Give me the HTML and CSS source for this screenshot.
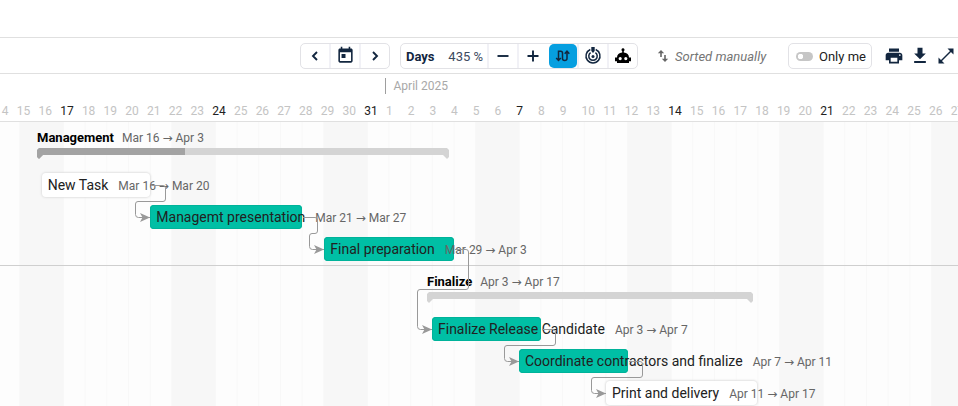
FILE: index.html
```html
<!DOCTYPE html>
<html lang="en">
<head>
    <meta charset="UTF-8">
    <meta name="viewport" content="width=device-width, initial-scale=1.0">
    <title>Gantt</title>
    <link rel="stylesheet" href="styles.css">
</head>
<body>
    <div class="toolbar">
        <div class="btn-group">
            <button class="btn"><svg width="16" height="16" viewBox="0 0 16 16"><path class="stroke" d="M10 4L6 8l4 4"/></svg></button>
            <button class="btn"><svg width="19" height="19" viewBox="0 0 24 24"><path d="M19 3h-1V1h-2v2H8V1H6v2H5c-1.11 0-1.99.9-1.99 2L3 19c0 1.1.89 2 2 2h14c1.1 0 2-.9 2-2V5c0-1.1-.9-2-2-2zm0 16H5V8h14v11zM7 10h5v5H7z"/></svg></button>
            <button class="btn"><svg width="16" height="16" viewBox="0 0 16 16"><path class="stroke" d="M6 4l4 4-4 4"/></svg></button>
        </div>

        <div class="btn-group zoom-group">
            <div class="scale"><b>Days</b><span>435 %</span></div>
            <button class="btn"><svg width="16" height="16" viewBox="0 0 16 16"><path class="stroke" d="M2.5 8h11"/></svg></button>
            <button class="btn"><svg width="16" height="16" viewBox="0 0 16 16"><path class="stroke" d="M2.5 8h11M8 2.5v11"/></svg></button>
            <button class="btn active"><svg width="16" height="16" viewBox="0 0 16 16"><path class="thin" d="M1.200 10l2.300 2.500L5.800 10M3.500 12V3.200h2.200Q7.500 3.200 7.500 5v5.500q0 2 2.200 2t2.300-2V3.500M9.700 5.700L12 3.200l2.300 2.500"/></svg></button>
            <button class="btn"><svg width="18" height="18" viewBox="0 0 18 18"><path class="thin" d="M6.300 2.500a7 7 0 1 0 5.400 0M6.600 5.700a4.200 4.200 0 1 0 4.800 0"/><circle cx="9" cy="9.500" r="1.500"/><path d="M7.300 0h3.400v4L9 6 7.300 4z"/></svg></button>
            <button class="btn"><svg width="18" height="18" viewBox="0 0 18 18"><path class="robot" fill-rule="evenodd" d="M9 1.300a1.500 1.500 0 0 1 .8 2.800V5.500c3.200.3 5.200 2.300 5.200 5h2v3.800h-2V16H3v-1.700H1v-3.800h2c0-2.700 2-4.700 5.200-5V4.100A1.500 1.500 0 0 1 9 1.300zM6.200 10a1.600 1.600 0 1 0 0 3.200 1.600 1.600 0 0 0 0-3.200zm5.600 0a1.600 1.600 0 1 0 0 3.200 1.600 1.600 0 0 0 0-3.200z"/></svg></button>
        </div>

        <div class="sorting">
            <svg width="12" height="14" viewBox="0 0 12 14"><path d="M4 1L.8 4.200h2.400V8h1.600V4.200h2.400zM8 13l3.200-3.200H8.800V6H7.200v3.800H4.800z"/></svg>
            <span>Sorted manually</span>
        </div>

        <div class="only-me"><span class="switch"></span>Only me</div>

        <div class="actions">
            <svg width="20" height="20" viewBox="0 0 24 24"><path d="M19 8H5c-1.660 0-3 1.340-3 3v6h4v4h12v-4h4v-6c0-1.660-1.340-3-3-3zm-3 11H8v-5h8v5zm3-7c-.55 0-1-.45-1-1s.45-1 1-1 1 .45 1 1-.45 1-1 1zm-1-9H6v4h12V3z"/></svg>
            <svg width="20" height="20" viewBox="0 0 24 24"><path d="M19 9h-4V2H9v7H5l7 7 7-7zM5 18v2.300h14V18H5z"/></svg>
            <svg width="20" height="20" viewBox="0 0 20 20"><path class="thin" d="M4 16L16 4"/><path d="M11.500 2.500h6v6zM2.500 11.500v6h6z"/></svg>
        </div>
    </div>

    <div class="timeline">
        <div class="month">April 2025</div>
        <div class="days" id="days"></div>
    </div>

    <div class="chart">
        <div class="group management">
            <div class="group-title"><b>Management</b><span class="dates">Mar 16 → Apr 3</span></div>
            <div class="summary"><div class="done"></div></div>
        </div>
        <div class="row"><div class="task plain new-task"><span>New Task</span><span class="dates">Mar 16 → Mar 20</span></div></div>
        <div class="row"><div class="task presentation"><span>Managemt presentation</span><span class="dates">Mar 21 → Mar 27</span></div></div>
        <div class="row"><div class="task preparation"><span>Final preparation</span><span class="dates">Mar 29 → Apr 3</span></div></div>

        <div class="group finalize">
            <div class="group-title"><b>Finalize</b><span class="dates">Apr 3 → Apr 17</span></div>
            <div class="summary"></div>
        </div>
        <div class="row"><div class="task candidate"><span>Finalize Release Candidate</span><span class="dates">Apr 3 → Apr 7</span></div></div>
        <div class="row"><div class="task contractors"><span>Coordinate contractors and finalize</span><span class="dates">Apr 7 → Apr 11</span></div></div>
        <div class="row"><div class="task plain delivery"><span>Print and delivery</span><span class="dates">Apr 11 → Apr 17</span></div></div>

        <!-- dependencies -->
        <svg class="links" width="958" height="285" viewBox="0 121 958 285">
            <defs>
                <marker id="arrow" markerWidth="11" markerHeight="10" refX="10" refY="4.500" orient="auto" markerUnits="userSpaceOnUse">
                    <path d="M0 0l10 4.500L0 9l2.500-4.500z"/>
                </marker>
            </defs>
            <path d="M151 185.500h12q2.500 0 2.500 2.500v11q0 2.500-2.500 2.500h-25q-2.500 0-2.500 2.500v10.500q0 3 3 3h11.500"/>
            <path d="M303 217.500h12q2.500 0 2.500 2.500v11q0 2.500-2.500 2.500h-3q-2.500 0-2.500 2.500v10.500q0 3 3 3h11.500"/>
            <path d="M455 249.500h11q2.500 0 2.500 2.500v35q0 2.500-2.500 2.500h-46q-2.500 0-2.500 2.500v34.500q0 3 3 3h11.500"/>
            <path d="M542 329.500h11q2.500 0 2.500 2.500v11q0 2.500-2.500 2.500h-46q-2.500 0-2.500 2.500v10.500q0 3 3 3h11.500"/>
            <path d="M629 361.500h11q2.500 0 2.500 2.500v11q0 2.500-2.500 2.500h-46q-2.500 0-2.500 2.500v10.500q0 3 3 3h11.500"/>
        </svg>
    </div>

    <script>
        // Mar 14 - Apr 27
        const days = document.getElementById('days');
        const start = new Date(2025, 2, 14);

        for (let i = 0; i < 45; i++) {
            const date = new Date(start.getFullYear(), start.getMonth(), start.getDate() + i);
            const day = document.createElement('span');
            day.textContent = date.getDate();
            if (date.getDay() === 1) {
                day.className = 'monday';
            }
            days.appendChild(day);
        }
    </script>
</body>
</html>
```
FILE: styles.css
```css
* {
    margin: 0;
    padding: 0;
    box-sizing: border-box;
}

body {
    font-family: Roboto, "DejaVu Sans", sans-serif;
    font-size: 14px;
    color: #212121;
    background: white;
    height: 100vh;
    padding-top: 37px;
    overflow: hidden;
}

svg {
    display: block;
    flex: none;
    fill: #12263f;
}

.stroke,
.thin {
    fill: none;
    stroke: #12263f;
    stroke-width: 1.9;
}

.thin {
    stroke-width: 1.5;
}

/* Toolbar */
.toolbar {
    display: flex;
    align-items: center;
    height: 37px;
    padding-left: 300px;
    border-top: 1px solid #e0e0e0;
    border-bottom: 1px solid #e0e0e0;
}

.btn-group {
    display: flex;
    width: 90px;
    height: 26px;
    flex: none;
    border: 1px solid #e2e2e6;
    border-radius: 5px;
}

.btn {
    display: flex;
    align-items: center;
    justify-content: center;
    flex: 1;
    border: none;
    border-left: 2px solid #f1f1f6;
    background: none;
}

.btn:first-child {
    border-left: none;
}

.zoom-group {
    width: 238px;
    margin-left: 10px;
}

.zoom-group .btn {
    flex: 0 0 30px;
}

.zoom-group .btn.active {
    flex-basis: 28px;
    margin: 0 0 0 2px;
    border: none;
    border-radius: 5px;
    background: #069fe0;
}

.scale {
    display: flex;
    align-items: center;
    justify-content: space-between;
    width: 87px;
    padding: 1px 4px 0 5px;
    font-size: 13px;
    color: #12263f;
    white-space: nowrap;
}

.scale span {
    color: #3c4a5e;
}

.robot {
    fill: #000;
}

.sorting {
    display: flex;
    align-items: center;
    gap: 6px;
    width: 131px;
    margin-left: 19px;
    padding-top: 1px;
    font-size: 13px;
    font-style: italic;
    color: #757575;
    white-space: nowrap;
}

.sorting svg {
    fill: #666;
}

.only-me {
    display: flex;
    align-items: center;
    gap: 6px;
    width: 84px;
    height: 26px;
    flex: none;
    padding: 1px 0 0 7px;
    border: 1px solid #e2e2e6;
    border-radius: 5px;
    font-size: 13px;
    white-space: nowrap;
}

.switch {
    width: 17px;
    height: 9px;
    border-radius: 5px;
    background: radial-gradient(circle at 4.5px 50%, white 2.5px, #c6c6c6 3px);
}

.actions {
    display: flex;
    gap: 6px;
    margin-left: 12px;
}

/* Timeline header */
.timeline {
    height: 47px;
    padding-top: 4px;
    overflow: hidden;
}

.month {
    height: 16px;
    margin-left: 385px;
    padding-left: 7.500px;
    border-left: 1px solid #9e9e9e;
    font-size: 12px;
    line-height: 16px;
    color: #a8a8a8;
}

.days {
    display: flex;
    margin: 9px 0 0 -5px;
    font-size: 12px;
    line-height: 16px;
    color: #c4c4c4;
}

.days span {
    flex: 0 0 21.730px;
}

.days .monday {
    color: #212121;
}

/* Chart */
.chart {
    position: relative;
    height: 285px;
    overflow: hidden;
    background-color: #fdfdfd;
    background-image:
        linear-gradient(to right, #f7f7f7 44.5px, transparent 44.5px),
        linear-gradient(to right, #f8f8f8 1px, transparent 1px);
    background-size: 152px 100%, 21.714px 100%;
    background-position: 19.500px 0, 19.500px 0;
}

.group {
    height: 48px;
    padding-top: 7px;
    border-top: 1px solid #e0e0e0;
}

.finalize {
    border-top-color: #cfcfcf;
}

.management {
    padding-left: 37px;
}

.finalize {
    padding-left: 427px;
}

.group-title {
    display: flex;
    align-items: center;
    height: 16px;
    font-size: 13px;
    color: #000;
    white-space: nowrap;
}

.group-title .dates {
    margin-left: 8px;
}

.dates {
    margin-left: 10px;
    padding-top: 1px;
    font-size: 12px;
    color: #666;
}

.summary {
    width: 412px;
    height: 11px;
    margin-top: 3px;
    background: #d4d4d4;
    clip-path: polygon(0 2px, 2px 0, calc(100% - 2px) 0, 100% 2px, 100% 9px, calc(100% - 2px) 11px, calc(100% - 6px) 7px, 6px 7px, 2px 11px, 0 9px);
}

.finalize .summary {
    width: 326px;
}

.done {
    width: 148px;
    height: 11px;
    background: #a3a3a3;
}

.row {
    display: flex;
    align-items: center;
    height: 32px;
}

.task {
    display: flex;
    align-items: center;
    height: 24px;
    padding-left: 6px;
    border-radius: 4px;
    background: #00bfa5;
    box-shadow: inset 0 0 0 1px #00b39a;
    white-space: nowrap;
}

.task.plain {
    background: white;
    box-shadow: 0 0 2px 1px #e2e2e2;
}

.new-task {
    width: 108px;
    margin-left: 41.700px;
}

.presentation {
    width: 152px;
    margin-left: 150.300px;
}

.preparation {
    width: 130px;
    margin-left: 324.300px;
}

.candidate {
    width: 109px;
    margin-left: 432px;
}

.contractors {
    width: 109px;
    margin-left: 519px;
}

.delivery {
    width: 151px;
    margin-left: 606px;
}

.links {
    position: absolute;
    top: 0;
    left: 0;
    fill: none;
}

.links > path {
    stroke: #999;
    marker-end: url(#arrow);
}

.links marker path {
    fill: #999;
}
```
